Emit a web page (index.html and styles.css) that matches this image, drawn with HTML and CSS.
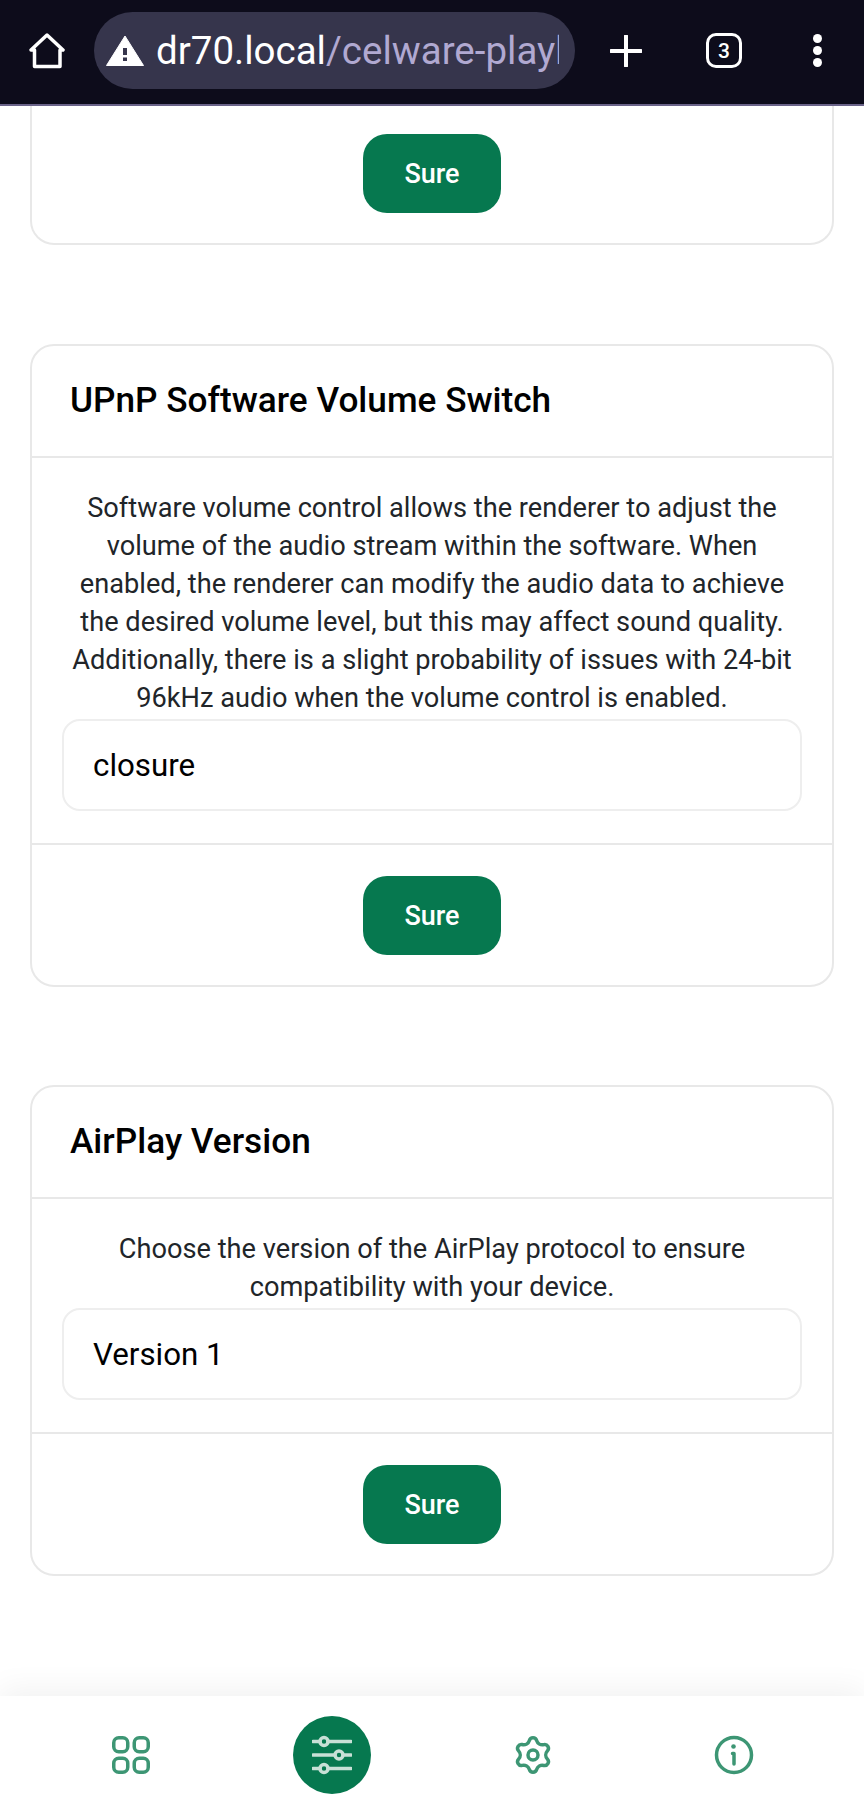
FILE: index.html
```html
<!DOCTYPE html>
<html lang="en">
<head>
    <meta charset="UTF-8">
    <meta name="viewport" content="width=device-width, initial-scale=1.0">
    <title>Renderer settings</title>
    <link rel="stylesheet" href="styles.css">
</head>
<body>
    <header class="browser-bar">
        <svg class="bar-icon home-icon" viewBox="0 0 36 36"><path d="M18 2 34 17h-3v16.500H5.500V17H2z" /></svg>
        <div class="url-pill">
            <svg class="warn-icon" viewBox="0 0 38 31"><path class="warn-shape" d="M19 1 37.500 30.500H.5z" /><rect class="warn-mark" x="17" y="13" width="4" height="7" /><rect class="warn-mark" x="17" y="22.500" width="4" height="3.500" /></svg>
            <div class="url-text"><span class="url-host">dr70.local</span><span class="url-path">/celware-playback</span></div>
        </div>
        <svg class="bar-icon plus-icon" viewBox="0 0 32 32"><path d="M16 1v30M1 16h30" /></svg>
        <div class="tab-count">3</div>
        <div class="dots"><span></span><span></span><span></span></div>
    </header>

    <main class="content">
        <section class="card card-cut">
            <div class="card-foot"><button class="btn-sure">Sure</button></div>
        </section>

        <section class="card">
            <h2 class="card-head">UPnP Software Volume Switch</h2>
            <div class="card-body">
                <p>Software volume control allows the renderer to adjust the volume of the audio stream within the software. When enabled, the renderer can modify the audio data to achieve the desired volume level, but this may affect sound quality. Additionally, there is a slight probability of issues with 24-bit 96kHz audio when the volume control is enabled.</p>
                <div class="select-box">closure</div>
            </div>
            <div class="card-foot"><button class="btn-sure">Sure</button></div>
        </section>

        <section class="card">
            <h2 class="card-head">AirPlay Version</h2>
            <div class="card-body">
                <p>Choose the version of the AirPlay protocol to ensure compatibility with your device.</p>
                <div class="select-box">Version 1</div>
            </div>
            <div class="card-foot"><button class="btn-sure">Sure</button></div>
        </section>
    </main>

    <nav class="bottom-nav">
        <div class="nav-item">
            <svg class="nav-icon" viewBox="0 0 40 40"><rect x="2.750" y="2.750" width="14" height="14" rx="5" /><rect x="23.250" y="2.750" width="14" height="14" rx="5" /><rect x="2.750" y="23.250" width="14" height="14" rx="5" /><rect x="23.250" y="23.250" width="14" height="14" rx="5" /></svg>
        </div>
        <div class="nav-item nav-active">
            <svg class="nav-icon" viewBox="0 0 40 40"><path d="M1 6.500h7M16 6.500h23M1 20h22M31 20h8M1 33.500h7M16 33.500h23" /><circle cx="12" cy="6.500" r="4" /><circle cx="27" cy="20" r="4" /><circle cx="12" cy="33.500" r="4" /></svg>
        </div>
        <div class="nav-item">
            <svg class="nav-icon" viewBox="0 0 40 40"><path d="M16.370 5.450A3.800 3.800 0 0 1 23.630 5.450 6 6 0 0 0 30.790 9.580 3.800 3.800 0 0 1 34.420 15.860 6 6 0 0 0 34.420 24.140 3.800 3.800 0 0 1 30.790 30.420 6 6 0 0 0 23.630 34.550 3.800 3.800 0 0 1 16.370 34.550 6 6 0 0 0 9.210 30.420 3.800 3.800 0 0 1 5.580 24.140 6 6 0 0 0 5.580 15.860 3.800 3.800 0 0 1 9.210 9.580 6 6 0 0 0 16.370 5.450z" /><circle cx="20" cy="20" r="5" /></svg>
        </div>
        <div class="nav-item">
            <svg class="nav-icon" viewBox="0 0 40 40"><circle cx="20" cy="20" r="17.500" /><path d="M18.500 18.500h1.500v10.500" /><circle class="info-dot" cx="19.500" cy="11.500" r="2.300" /></svg>
        </div>
    </nav>
</body>
</html>
```

FILE: styles.css
```css
* {
    box-sizing: border-box;
}

body {
    margin: 0;
    height: 1813px;
    display: flex;
    flex-direction: column;
    overflow: hidden;
    background-color: #fff;
    font-family: Roboto, 'Liberation Sans', sans-serif;
    color: #212529;
}

.browser-bar {
    height: 106px;
    flex-shrink: 0;
    display: flex;
    align-items: center;
    padding: 0 0 3px 29px;
    background-color: #0d0c1b;
    border-bottom: 2px solid #6a6389;
}

.bar-icon {
    flex-shrink: 0;
}

.home-icon {
    width: 36px;
    height: 36px;
    fill: none;
    stroke: #fff;
    stroke-width: 3.5;
    stroke-linejoin: round;
}

.url-pill {
    width: 481px;
    height: 77px;
    margin-left: 29px;
    padding: 0 16px 0 12px;
    display: flex;
    align-items: center;
    gap: 12px;
    border-radius: 39px;
    background-color: #36354c;
}

.warn-icon {
    width: 38px;
    height: 31px;
    flex-shrink: 0;
}

.warn-shape {
    fill: #fff;
    stroke: #fff;
    stroke-linejoin: round;
}

.warn-mark {
    fill: #36354c;
}

.url-text {
    flex: 1;
    overflow: hidden;
    white-space: nowrap;
    font-size: 38.500px;
    line-height: 48px;
}

.url-host {
    color: #fff;
}

.url-path {
    color: #b1a9d1;
}

.plus-icon {
    width: 32px;
    height: 32px;
    margin-left: 35px;
    fill: none;
    stroke: #fff;
    stroke-width: 4;
    stroke-linecap: round;
}

.tab-count {
    width: 36px;
    height: 35px;
    margin-left: 64px;
    display: flex;
    align-items: center;
    justify-content: center;
    border: 3px solid #fff;
    border-radius: 10px;
    color: #fff;
    font-size: 21px;
    font-weight: 500;
}

.dots {
    margin-left: 71px;
    display: flex;
    flex-direction: column;
    gap: 3px;
}

.dots span {
    width: 9px;
    height: 9px;
    border-radius: 50%;
    background-color: #fff;
}

.content {
    flex: 1;
    padding: 0 30px;
    display: flex;
    flex-direction: column;
    gap: 98px;
}

.card {
    border: 2px solid #e8e8e8;
    border-radius: 24px;
    background-color: #fff;
}

.card-cut {
    margin-bottom: 1px;
    border-top: none;
    border-top-left-radius: 0;
    border-top-right-radius: 0;
}

.card-head {
    height: 112px;
    margin: 0;
    padding: 0 38px 2px;
    display: flex;
    align-items: center;
    border-bottom: 2px solid #e8e8e8;
    font-size: 35.200px;
    font-weight: 500;
    color: #000;
}

.card-body {
    padding: 31px 30px 32px;
    border-bottom: 2px solid #e8e8e8;
    text-align: center;
}

.card-body p {
    margin: 0 0 2px;
    font-size: 27.200px;
    line-height: 38px;
}

.select-box {
    height: 92px;
    padding: 0 29px;
    display: flex;
    align-items: center;
    border: 2px solid #eeeeee;
    border-radius: 18px;
    font-size: 31.300px;
    color: #000;
    text-align: left;
}

.card-foot {
    padding: 31px 0 30px;
    display: flex;
    justify-content: center;
}

.card-cut .card-foot {
    padding-top: 28px;
}

.btn-sure {
    width: 138px;
    height: 79px;
    border: none;
    border-radius: 24px;
    background-color: #06784f;
    color: #fff;
    font-family: inherit;
    font-size: 27px;
    font-weight: 500;
}

.bottom-nav {
    height: 117px;
    flex-shrink: 0;
    padding: 0 30px;
    display: grid;
    grid-template-columns: repeat(4, 1fr);
    align-items: center;
    background-color: #fff;
    box-shadow: 0 -6px 30px rgba(0, 0, 0, 0.06);
}

.nav-item {
    display: flex;
    justify-content: center;
}

.nav-icon {
    width: 40px;
    height: 40px;
    fill: none;
    stroke: #3d9674;
    stroke-width: 3.500;
    stroke-linecap: round;
    stroke-linejoin: round;
}

.info-dot {
    fill: #3d9674;
    stroke: none;
}

.nav-active {
    width: 78px;
    height: 78px;
    justify-self: center;
    align-items: center;
    border-radius: 50%;
    background-color: #06784f;
}

.nav-active .nav-icon {
    stroke: #c8e0d6;
}
```
